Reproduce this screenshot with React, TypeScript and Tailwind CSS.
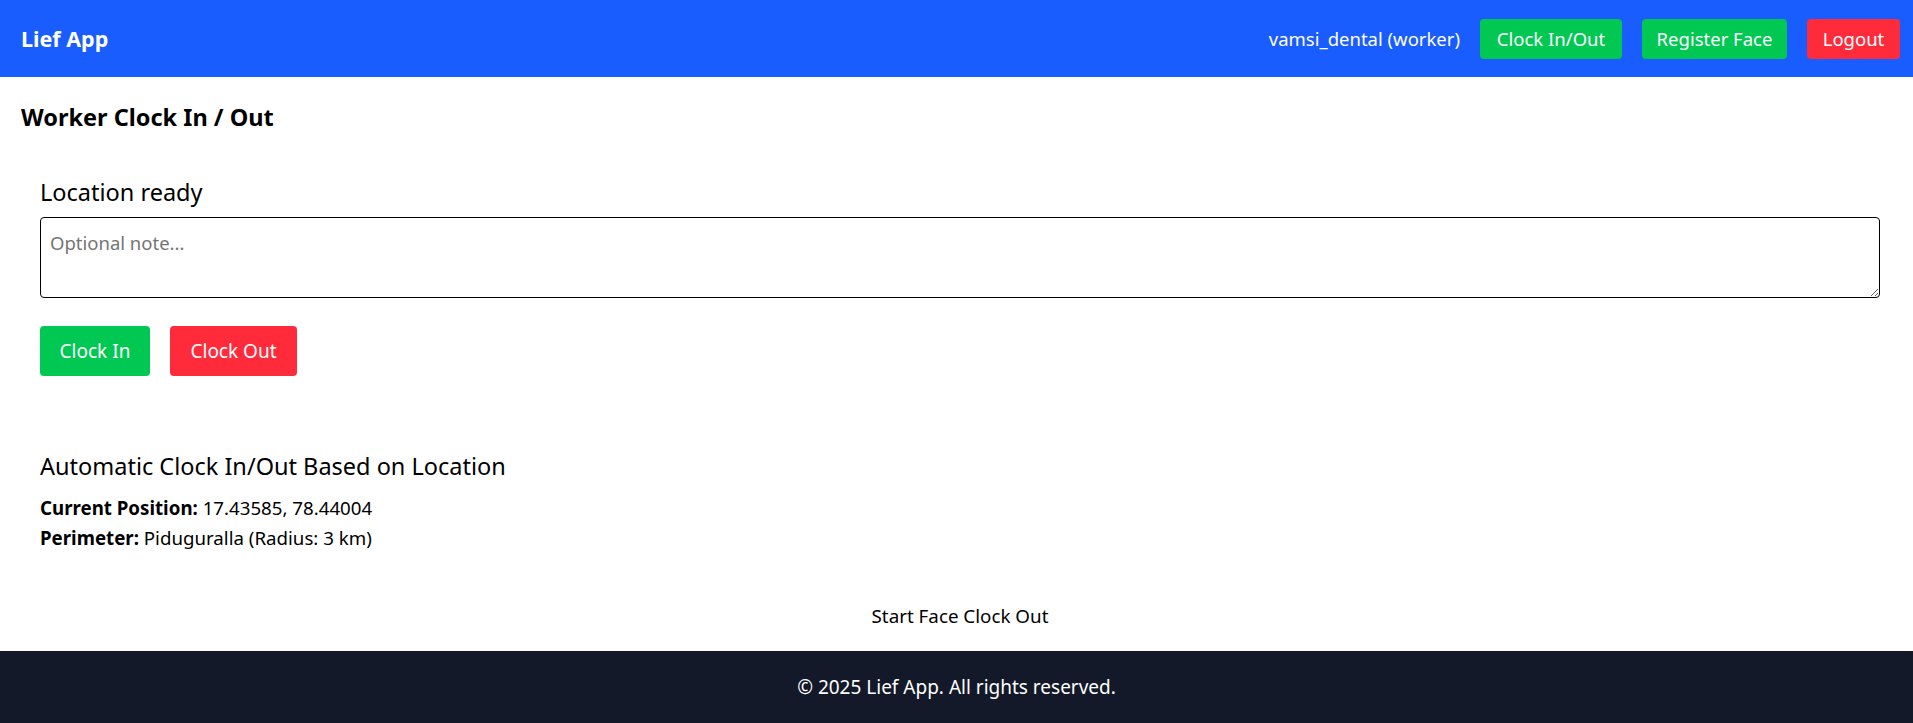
import React from "react";

export default function App() {
  return (
    <div className="min-h-screen flex flex-col bg-white text-black font-['Noto_Sans','Open_Sans',sans-serif]">
      <header className="h-[77px] bg-[#195cff] flex items-center justify-between pl-[21px] pr-[13px]">
        <span className="text-white font-bold text-[21.5px] leading-none">Lief App</span>
        <div className="flex items-center gap-[20px]">
          <span className="text-white text-[18.5px]">vamsi_dental (worker)</span>
          <button className="h-[40px] w-[142px] rounded-[4px] bg-[#00c853] text-white text-[18.5px]">Clock In/Out</button>
          <button className="h-[40px] w-[145px] rounded-[4px] bg-[#00c853] text-white text-[18.5px]">Register Face</button>
          <button className="h-[40px] w-[93px] rounded-[4px] bg-[#ff2b3b] text-white text-[18.5px]">Logout</button>
        </div>
      </header>

      <main className="flex-1">
        <h1 className="mt-[26px] px-[21px] text-[23.5px] leading-[28px] font-bold">Worker Clock In / Out</h1>

        <section className="pl-[40px] pr-[33px]">
          <h2 className="mt-[45px] text-[23.5px] leading-[32px]">Location ready</h2>
          <textarea
            placeholder="Optional note..."
            className="mt-[9px] block w-full h-[81px] border border-black rounded-[4px] px-[9px] pt-[12px] pb-[8px] text-[18.5px] leading-[26px] placeholder:text-[#757575] outline-none resize-y"
          />
          <div className="mt-[28px] flex gap-[20px]">
            <button className="h-[50px] w-[110px] rounded-[4px] bg-[#00c853] text-white text-[19px]">Clock In</button>
            <button className="h-[50px] w-[127px] rounded-[4px] bg-[#ff2b3b] text-white text-[19px]">Clock Out</button>
          </div>

          <h3 className="mt-[75px] text-[23.5px] leading-[30px]">Automatic Clock In/Out Based on Location</h3>
          <div className="mt-[12px] text-[18.7px] leading-[30px]">
            <p>
              <strong className="font-bold">Current Position:</strong> 17.43585, 78.44004
            </p>
            <p>
              <strong className="font-bold">Perimeter:</strong> Piduguralla (Radius: 3 km)
            </p>
          </div>
        </section>

        <div className="mt-[50px] pl-[7px] text-center text-[18.8px] leading-[27px]">Start Face Clock Out</div>
        <div className="h-[20px]" />
      </main>

      <footer className="h-[72px] bg-[#131929] flex items-center justify-center text-white text-[19px]">
        © 2025 Lief App. All rights reserved.
      </footer>
    </div>
  );
}
